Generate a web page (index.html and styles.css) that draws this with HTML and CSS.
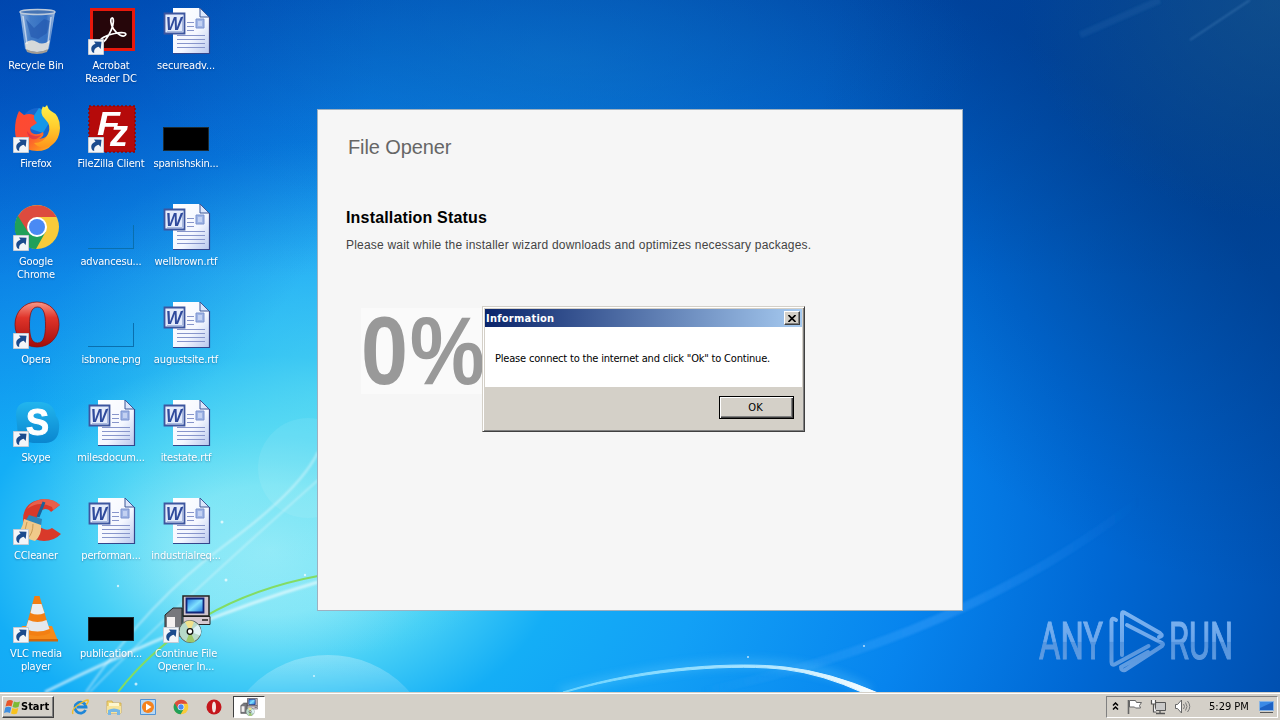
FILE: index.html
```
<!DOCTYPE html>
<html lang="en">
<head>
  <meta charset="UTF-8">
  <title>File Opener</title>
  <link rel="stylesheet" href="styles.css">
</head>
<body>
<!-- shared icons -->
<svg class="defs" width="0" height="0">
  <defs>
    <linearGradient id="gPage" x1="0" y1="0" x2="1" y2="1"><stop offset="0" stop-color="#fff"/><stop offset=".6" stop-color="#f4f7ff"/><stop offset="1" stop-color="#b9c8ee"/></linearGradient>
    <linearGradient id="gRed" x1="0" y1="0" x2="0" y2="1"><stop offset="0" stop-color="#f79a8a"/><stop offset=".35" stop-color="#e0342a"/><stop offset="1" stop-color="#a30d0a"/></linearGradient>
    <linearGradient id="gFox" x1="0" y1="0" x2="1" y2="1"><stop offset="0" stop-color="#ff4a2e"/><stop offset=".45" stop-color="#fb4a35"/><stop offset=".75" stop-color="#ff8a1f"/><stop offset="1" stop-color="#ffc52b"/></linearGradient>
    <linearGradient id="gTail" x1="0" y1="0" x2="0" y2="1"><stop offset="0" stop-color="#fff04a"/><stop offset=".5" stop-color="#ffce2e"/><stop offset="1" stop-color="#ff961c"/></linearGradient>
    <linearGradient id="gSky" x1="0" y1="0" x2="0" y2="1"><stop offset="0" stop-color="#22b5ee"/><stop offset="1" stop-color="#0a86cf"/></linearGradient>
    <linearGradient id="gBin" x1="0" y1="0" x2="1" y2="0"><stop offset="0" stop-color="#c4d6ea" stop-opacity=".8"/><stop offset=".3" stop-color="#6f9dd4" stop-opacity=".6"/><stop offset=".75" stop-color="#5b8ccd" stop-opacity=".55"/><stop offset="1" stop-color="#d5e2f0" stop-opacity=".8"/></linearGradient>
    <linearGradient id="gScreen" x1="0" y1="0" x2="1" y2="1"><stop offset="0" stop-color="#1c74e0"/><stop offset=".5" stop-color="#7fe0ff"/><stop offset="1" stop-color="#1a70dc"/></linearGradient>

    <symbol id="word" viewBox="0 0 48 48">
      <path d="M10 1h26l10 9v36H10z" fill="url(#gPage)"/>
      <path d="M10 46.500h36.500V10" fill="none" stroke="#33468c" stroke-width="1.200"/>
      <path d="M37 1v9h9z" fill="#dbe6fb" stroke="#3d5796" stroke-width="1"/>
      <path d="M24 15.500h7M24 19.500h7M24 23.500h7M14 28.500h28M14 32.500h28M14 36.500h28M14 40.500h28" stroke="#8795cb" stroke-width="1.200"/>
      <path d="M33 12h8v9h-8z" fill="#9fb4e4" stroke="#7b92cf"/>
      <path d="M35 14h4v5h-4z" fill="#c3d1f2"/>
      <path d="M1.500 6.500h20v20h-20z" fill="#e4ebfb" stroke="#3d569f" stroke-width="1.800"/>
      <path d="M4 24.500h15.500V9" fill="none" stroke="#a9badf"/>
      <text x="3" y="22.500" class="word-w" textLength="16" lengthAdjust="spacingAndGlyphs">W</text>
    </symbol>

    <symbol id="shortcut" viewBox="0 0 16 16">
      <path d="M.500.500h15v15H.500z" fill="#f3f5f8" stroke="#c5cbd4"/>
      <path d="M5 13.800C2.300 11 2.500 6.500 7.500 4.800L6 2.500l7.500.3-.8 7.200-2-2.200C8 8.500 5.500 10.500 6.300 13.800z" fill="#1b4b8d"/>
    </symbol>

    <symbol id="bin" viewBox="0 0 48 48">
      <path d="M7 5l5 37q12 6 24 0l6-37z" fill="url(#gBin)"/>
      <ellipse cx="24.500" cy="5" rx="17.500" ry="2.500" fill="#4674b4" stroke="#bccadb" stroke-width="1.500"/>
      <path d="M12 36q6-5 12-1t13-2l-2 10q-11 4-22 0z" fill="#e6e3dc" opacity=".9"/>
      <path d="M13 42q11 6 22 0l-1 3q-10 4-20 0z" fill="#a19c94"/>
      <path d="M13 12l8 9 10-9 6 2-3 12-9 6-7-2z" fill="#2457ad" opacity=".65"/>
      <path d="M10 9l4 28M38 10l-3 26" stroke="#fff" stroke-width="1.500" opacity=".55"/>
    </symbol>

    <symbol id="acrobat" viewBox="0 0 48 48">
      <path d="M3.500 2.500h42v40h-42z" fill="#26060a" stroke="#e8180c" stroke-width="3"/>
      <path d="M12 35.500c3 2 8-5 11-12 3-6 3-13 1-12.500s-1.500 6 1.500 11c4 6 10 8.500 12 6s-4-3-11-1.500c-8 1.500-16 5.500-14.500 9z" fill="none" stroke="#fff" stroke-width="1.700"/>
    </symbol>

    <symbol id="firefox" viewBox="0 0 48 48">
      <circle cx="25" cy="20" r="17" fill="#1766cf"/>
      <path d="M26 3q10 4 10 15l-6 10-12-4q-2-8 8-21z" fill="#1597e8"/>
      <path d="M6 6l5 4q5-2 10 0v4l3 4-6 4q-2 3 1 6 5 3 11-1 2 4-4 7 10-1 14-10l3-2q1 24-19 24Q2 45 2 25 2 14 6 6z" fill="url(#gFox)"/>
      <path d="M30 1q-4 8 2 13 7 7 3 15-4 9-14 9 5 6 14 4 11-4 12-19Q47 10 38 6q-3-2-4-6-3 4-4 1z" fill="url(#gTail)"/>
      <path d="M14 26q4 7 14 4-3 5-9 4-5-3-5-8z" fill="#c81c5a" opacity=".5"/>
    </symbol>

    <symbol id="filezilla" viewBox="0 0 48 48">
      <path d="M1 1h46v46H1z" fill="#b50a0a" stroke="#8e0808" stroke-width="1.600" stroke-dasharray="2 2"/>
      <text x="9" y="30" class="fz-f" textLength="23" lengthAdjust="spacingAndGlyphs">F</text>
      <text x="22" y="41" class="fz-z" textLength="18" lengthAdjust="spacingAndGlyphs">z</text>
    </symbol>

    <symbol id="chrome" viewBox="0 0 48 48">
      <circle cx="24" cy="24" r="22" fill="#f9cb3a"/>
      <path d="M24 24L5 12.500A22 22 0 0 0 23 46l9.500-17z" fill="#20a05a"/>
      <path d="M5 13l10 16 9-15h19.500A22 22 0 0 0 5 13z" fill="#dd4b3e"/>
      <circle cx="24" cy="24" r="10" fill="#fff"/>
      <circle cx="24" cy="24" r="8" fill="#4a8af4"/>
    </symbol>

    <symbol id="opera" viewBox="0 0 48 48">
      <path fill-rule="evenodd" d="M24 1C37 1 46 11 46 23.500S37 46 24 46 2 36 2 23.500 11 1 24 1zM24.500 6C18 6 16.500 14 16.500 24s1.500 18 8 18 8-8 8-18-1.500-18-8-18z" fill="url(#gRed)" stroke="#8f0f0c" stroke-width=".8"/>
    </symbol>

    <symbol id="skype" viewBox="0 0 48 48">
      <path d="M3 16Q3 4 14 3h14q13 1 15 14 4 4 3 13-1 13-13 14H20Q4 42 4 26z" fill="url(#gSky)"/>
      <text x="13" y="35.500" class="skype-s" textLength="23" lengthAdjust="spacingAndGlyphs">S</text>
    </symbol>

    <symbol id="ccleaner" viewBox="0 0 48 48">
      <path d="M47 8Q41 2 31 2 10 4 10 23q2 20 21 21 10 0 17-7l-9-6q-4 3-8 1-8-2-7-10 1-9 8-10 4 0 6 3z" fill="#d9392a"/>
      <path d="M47 8Q41 2 31 2q-12 1-17 10 12-9 25-2l1 3z" fill="#ef7158" opacity=".7"/>
      <path d="M31 5l-6 15" stroke="#1d6196" stroke-width="3"/>
      <path d="M16 18l13 4-1 7-15-6z" fill="#2f86b8"/>
      <path d="M11 22l17 6q1 10-6 16L2 38q7-4 9-16z" fill="#f0c98a"/>
      <path d="M14 25q-1 9-6 14M20 27q0 9-5 14" stroke="#c99a55" fill="none"/>
    </symbol>

    <symbol id="vlc" viewBox="0 0 48 48">
      <path d="M9 31h30l6 15H4z" fill="#f58a1a"/>
      <path d="M4 44h41v2.500H4z" fill="#d46708"/>
      <path d="M21.500 1h5l11 37q-13 6-26 0z" fill="#f37f12"/>
      <path d="M19.500 9h9l3 9q-7 3-14 0z" fill="#eceef0"/>
      <path d="M15.500 25q9 4 18 0l3 9q-12 5-24 0z" fill="#e4e8ec"/>
    </symbol>

    <symbol id="setup" viewBox="0 0 48 48">
      <path d="M2 20l8-7h9v28H2z" fill="#77777c" stroke="#222"/>
      <path d="M4 22h8v15H4z" fill="#f4f0f0"/>
      <path d="M20 1h26v20H20z" fill="#cfc3cd" stroke="#222" stroke-width="1.500"/>
      <path d="M23.500 3.500h17v14h-17z" fill="url(#gScreen)" stroke="#10257a" stroke-width="1.800"/>
      <path d="M20 21.500h27v8H20z" fill="#d6cad2" stroke="#222"/>
      <path d="M39 25h6" stroke="#222" stroke-width="1.500"/>
      <circle cx="27" cy="36.500" r="11" fill="#b8d9c9" stroke="#57605c"/>
      <path d="M27 36.500L22 27q5-3 9 0z" fill="#f1e08a"/>
      <path d="M27 36.500l8-7q5 6 2 11z" fill="#dff3f6"/>
      <path d="M27 36.500l-4 10q6 2 9 0z" fill="#9ec86b"/>
      <circle cx="27" cy="36.500" r="2.800" fill="#fff" stroke="#111" stroke-width="1.300"/>
    </symbol>
  </defs>
</svg>

<div class="desktop">
  <svg class="wallpaper" viewBox="0 0 1280 692">
    <defs>
      <filter id="soft1"><feGaussianBlur stdDeviation="1.200"/></filter>
      <filter id="soft4" x="-10%" y="-50%" width="120%" height="200%"><feGaussianBlur stdDeviation="5"/></filter>
      <linearGradient id="arc" x1="560" y1="0" x2="880" y2="0" gradientUnits="userSpaceOnUse"><stop offset="0" stop-color="#6cd4ff"/><stop offset=".6" stop-color="#a8e4ff"/><stop offset="1" stop-color="#fff"/></linearGradient>
      <linearGradient id="ray" x1="700" y1="0" x2="1140" y2="0" gradientUnits="userSpaceOnUse"><stop offset="0" stop-color="#5ab8ff" stop-opacity="0"/><stop offset=".55" stop-color="#4ba8ff" stop-opacity=".35"/><stop offset="1" stop-color="#3a9bff" stop-opacity="0"/></linearGradient>
      <linearGradient id="bub" x1="0" y1="655" x2="0" y2="700" gradientUnits="userSpaceOnUse"><stop offset="0" stop-color="#fff" stop-opacity=".28"/><stop offset="1" stop-color="#fff" stop-opacity=".1"/></linearGradient>
    </defs>
    <g fill="none" stroke="#fff" filter="url(#soft1)">
      <path d="M45 692Q190 620 318 582" stroke-width="3" opacity=".6"/>
      <path d="M86 692Q150 600 225 545T318 452" stroke-width="2" opacity=".45"/>
      <path d="M90 692Q150 630 318 480" stroke-width="1.500" opacity=".45"/>
      <path d="M700 692Q960 640 1140 500" stroke="url(#ray)" stroke-width="9"/>
      <path d="M1190 40L1250 0" stroke="#7fb0e0" stroke-width="1.500" opacity=".35"/>
      <path d="M1080 35L1160 0" stroke="#5d9bd6" stroke-width="7" opacity=".1"/>
    </g>
    <path d="M118 692Q190 600 318 576" fill="none" stroke="#83dc63" stroke-width="2"/>
    <path d="M560 692Q780 635 870 692" fill="none" stroke="#7fd8ff" stroke-width="8" opacity=".3" filter="url(#soft4)"/>
    <path d="M563 692C650 665 740 662 785 667Q830 672 878 693L864 693Q822 674 785 669.500C740 664 650 668 566 692z" fill="url(#arc)" stroke="url(#arc)" stroke-width="1"/>
    <circle cx="328" cy="764" r="109" fill="url(#bub)"/>
    <circle cx="308" cy="468" r="50" fill="#fff" opacity=".08"/>
    <g fill="#fff" opacity=".7">
      <circle cx="222" cy="522" r="1.500"/><circle cx="226" cy="580" r="1.500"/><circle cx="136" cy="684" r="1.500"/><circle cx="305" cy="575" r="1.200"/><circle cx="118" cy="586" r="1.200"/><circle cx="314" cy="676" r="1"/><circle cx="748" cy="657" r="1"/><circle cx="864" cy="646" r="1"/>
    </g>
  </svg>

  <div class="icons">
    <div class="icon"><div class="pic"><svg><use href="#bin"/></svg></div><span>Recycle Bin</span></div>
    <div class="icon"><div class="pic"><svg><use href="#firefox"/></svg><svg class="arrow"><use href="#shortcut"/></svg></div><span>Firefox</span></div>
    <div class="icon"><div class="pic"><svg><use href="#chrome"/></svg><svg class="arrow"><use href="#shortcut"/></svg></div><span>Google<br>Chrome</span></div>
    <div class="icon"><div class="pic"><svg><use href="#opera"/></svg><svg class="arrow"><use href="#shortcut"/></svg></div><span>Opera</span></div>
    <div class="icon"><div class="pic"><svg><use href="#skype"/></svg><svg class="arrow"><use href="#shortcut"/></svg></div><span>Skype</span></div>
    <div class="icon"><div class="pic"><svg><use href="#ccleaner"/></svg><svg class="arrow"><use href="#shortcut"/></svg></div><span>CCleaner</span></div>
    <div class="icon"><div class="pic"><svg><use href="#vlc"/></svg><svg class="arrow"><use href="#shortcut"/></svg></div><span>VLC media<br>player</span></div>

    <div class="icon"><div class="pic"><svg><use href="#acrobat"/></svg><svg class="arrow"><use href="#shortcut"/></svg></div><span>Acrobat<br>Reader DC</span></div>
    <div class="icon"><div class="pic"><svg><use href="#filezilla"/></svg><svg class="arrow"><use href="#shortcut"/></svg></div><span>FileZilla Client</span></div>
    <div class="icon"><div class="pic"><div class="thumb clear"></div></div><span>advancesu...</span></div>
    <div class="icon"><div class="pic"><div class="thumb clear"></div></div><span>isbnone.png</span></div>
    <div class="icon"><div class="pic"><svg><use href="#word"/></svg></div><span>milesdocum...</span></div>
    <div class="icon"><div class="pic"><svg><use href="#word"/></svg></div><span>performan...</span></div>
    <div class="icon"><div class="pic"><div class="thumb"></div></div><span>publication...</span></div>

    <div class="icon"><div class="pic"><svg><use href="#word"/></svg></div><span>secureadv...</span></div>
    <div class="icon"><div class="pic"><div class="thumb"></div></div><span>spanishskin...</span></div>
    <div class="icon"><div class="pic"><svg><use href="#word"/></svg></div><span>wellbrown.rtf</span></div>
    <div class="icon"><div class="pic"><svg><use href="#word"/></svg></div><span>augustsite.rtf</span></div>
    <div class="icon"><div class="pic"><svg><use href="#word"/></svg></div><span>itestate.rtf</span></div>
    <div class="icon"><div class="pic"><svg><use href="#word"/></svg></div><span>industrialreq...</span></div>
    <div class="icon"><div class="pic"><svg><use href="#setup"/></svg><svg class="arrow"><use href="#shortcut"/></svg></div><span>Continue File<br>Opener In...</span></div>
  </div>

  <div class="installer">
    <h1>File Opener</h1>
    <h2>Installation Status</h2>
    <p>Please wait while the installer wizard downloads and optimizes necessary packages.</p>
    <div class="percent"><span>0%</span></div>
  </div>

  <div class="dialog">
    <div class="dialog-title">
      <span>Information</span>
      <button class="close"><svg width="8" height="7" viewBox="0 0 8 7"><path d="M.500 0l7 7M7.500 0l-7 7" stroke="#000" stroke-width="1.600"/></svg></button>
    </div>
    <div class="dialog-body">Please connect to the internet and click "Ok" to Continue.</div>
    <div class="dialog-buttons"><button class="ok">OK</button></div>
  </div>

  <svg class="watermark" width="220" height="80" viewBox="0 0 220 80">
    <defs>
      <linearGradient id="wm" x1="0" y1="0" x2="0" y2="70" gradientUnits="userSpaceOnUse"><stop offset="0" stop-color="#8fc0f5"/><stop offset=".52" stop-color="#78aeee"/><stop offset=".53" stop-color="#5f9be0"/><stop offset="1" stop-color="#6fa6e6"/></linearGradient>
    </defs>
    <g fill="url(#wm)" stroke="url(#wm)" stroke-width="1.200" class="wm-text">
      <text x="4" y="54" textLength="64" lengthAdjust="spacingAndGlyphs">ANY</text>
      <text x="134" y="54" textLength="64" lengthAdjust="spacingAndGlyphs">RUN</text>
    </g>
    <g fill="none" stroke="url(#wm)" stroke-width="4" stroke-linejoin="round" stroke-linecap="round">
      <path d="M81 15q-4-3-4.500 1v41q0 4 4 2l33-18"/>
      <path d="M87 50V9q0-3 3-1l35 20q4 3-1 4"/>
      <path d="M92 20l35 18q2 1 0 3L90 65q-4 1-4-3l27-15"/>
    </g>
  </svg>
</div>

<div class="taskbar">
  <button class="start">
    <svg width="17" height="16" viewBox="0 0 17 16">
      <path d="M3 2q3-2 6 0L7.500 7.500Q5 6 1.500 7.500z" fill="#e8562a"/>
      <path d="M10 2.500q3 1.500 6 0L14.500 8q-3 1.500-6 0z" fill="#7dba35"/>
      <path d="M1.300 8.500q3-1.500 6 0L6 14q-3-1.500-6 0z" fill="#3f8fe0"/>
      <path d="M8.300 9q3 1.500 6 0L13 14.500q-3 1.500-6 0z" fill="#f8c21d"/>
    </svg>
    Start
  </button>
  <div class="quick">
    <svg width="18" height="18" viewBox="0 0 18 18">
      <path d="M14.500 12A5.500 5.500 0 1 1 15 9H6" fill="none" stroke="#1e86d8" stroke-width="2.800"/>
      <path d="M2 16q-2-4 5-9t10-5q1 2-2 5" fill="none" stroke="#f0bd2c" stroke-width="1.400"/>
    </svg>
    <svg width="18" height="18" viewBox="0 0 18 18">
      <path d="M2 3h5l1 2h8v10H2z" fill="#f1d676" stroke="#cda84a" stroke-width=".8"/>
      <path d="M4 5h10v4H4z" fill="#fdf6cf"/>
      <path d="M2 8h14v7H2z" fill="#f8e49b"/>
      <path d="M3 17v-5q6-3 12 0v5h-3v-3H6v3z" fill="#76b8e6"/>
    </svg>
    <svg width="18" height="18" viewBox="0 0 18 18">
      <path d="M1.500 1.500h15v15h-15z" fill="#b8d8f4" stroke="#4f93d6"/>
      <circle cx="9" cy="9" r="6" fill="#f5821e"/>
      <path d="M7 5.500l5.500 3.500L7 12.500z" fill="#fff"/>
    </svg>
    <svg width="16" height="16"><use href="#chrome"/></svg>
    <svg width="18" height="18" viewBox="0 0 18 18">
      <circle cx="9" cy="9" r="7.500" fill="#c4161c"/>
      <ellipse cx="9" cy="9" rx="2" ry="5.500" fill="#f3e6e4"/>
    </svg>
  </div>
  <div class="task">
    <svg width="18" height="18" viewBox="0 0 48 48"><use href="#setup"/></svg>
  </div>
  <div class="tray">
    <svg width="7" height="9" viewBox="0 0 7 9"><path d="M1 3.500L3.500 1 6 3.500M1 7.500L3.500 5 6 7.500" fill="none" stroke="#000" stroke-width="1.500"/></svg>
    <svg width="17" height="17" viewBox="0 0 17 17"><path d="M2.500 2v14" stroke="#666" stroke-width="1.600"/><path d="M3.500 2.500h6l1 2h5l-2 3 1 2.500h-5l-1-1h-5z" fill="#fff" stroke="#666"/></svg>
    <svg width="17" height="17" viewBox="0 0 17 17"><path d="M5.500 4.500h10v8h-10z" fill="#c9c9c9" stroke="#555"/><path d="M6 15.500h9M10 13v2" stroke="#555" stroke-width="1.300"/><path d="M1.500 2v4h4V2M3.500 6v8h3" fill="#fff" stroke="#555" stroke-width="1.200"/></svg>
    <svg width="17" height="17" viewBox="0 0 17 17"><path d="M1.500 6.500h2l4-4.500v13l-4-4.500h-2z" fill="#fff" stroke="#666"/><path d="M9.500 6q2 2.500 0 5M11.500 4.500q3 4 0 8M13.500 3q4.500 5.500 0 11" fill="none" stroke="#777"/></svg>
    <span class="clock">5:29 PM</span>
    <svg width="16" height="14" viewBox="0 0 16 14"><path d="M.500 1.500h14v9H.500z" fill="#1d62c4" stroke="#88b4e4"/><path d="M1 2h13L1 8z" fill="#3b8ae6"/><path d="M1 12.500h13" stroke="#555"/></svg>
  </div>
</div>
</body>
</html>
```

FILE: styles.css
```
* {
  margin: 0;
  padding: 0;
  box-sizing: border-box;
}

:root {
  --face: #d4d0c8;
  --ui: Tahoma, "DejaVu Sans Condensed", "DejaVu Sans", sans-serif;
}

body {
  width: 1280px;
  height: 720px;
  overflow: hidden;
  display: flex;
  flex-direction: column;
  font-family: var(--ui);
  font-size: 11px;
}

.defs {
  position: absolute;
}

.desktop {
  position: relative;
  flex: 1;
  overflow: hidden;
  background:
    radial-gradient(ellipse 260px 220px at 1280px 0, rgba(30, 90, 135, 0.5), rgba(30, 90, 135, 0)),
    radial-gradient(ellipse 480px 460px at 1300px 130px, rgba(0, 55, 120, 0.55), rgba(0, 55, 120, 0)),
    radial-gradient(ellipse 420px 170px at 560px 60px, rgba(20, 125, 200, 0.4), rgba(20, 125, 200, 0)),
    linear-gradient(to bottom, rgba(0, 60, 150, 0.4), rgba(0, 60, 160, 0) 40%),
    radial-gradient(ellipse 380px 460px at 0 0, rgba(0, 60, 180, 0.55), rgba(0, 60, 180, 0)),
    radial-gradient(ellipse 290px 260px at 320px 400px, rgba(100, 225, 240, 0.6), rgba(70, 210, 240, 0)),
    radial-gradient(ellipse 1080px 720px at 270px 550px, #a0edfa 0, #88e7f8 9%, #48d0f6 17%, #14aef6 27%, #12a0f6 40%, #0784ee 60%, #0068d4 77%, #004aa8 100%);
}

.wallpaper {
  position: absolute;
  left: 0;
  top: 0;
  width: 1280px;
  height: 692px;
}

/* desktop icons */
.icons {
  position: relative;
  width: 225px;
  margin-left: -1px;
  padding-top: 7px;
  display: grid;
  grid-auto-flow: column;
  grid-template-rows: repeat(7, 98px);
  grid-auto-columns: 75px;
}

.icon {
  display: flex;
  flex-direction: column;
  align-items: center;
  color: #fff;
  text-align: center;
  line-height: 13px;
}

.icon span {
  margin-top: 4px;
  margin-left: -1px;
  white-space: nowrap;
  letter-spacing: -0.15px;
  text-shadow: 0 1px 2px rgba(0, 30, 80, 0.4);
}

.pic {
  position: relative;
  width: 48px;
  height: 48px;
  display: flex;
  align-items: flex-end;
  justify-content: center;
}

.pic svg {
  width: 48px;
  height: 48px;
}

.pic .arrow {
  position: absolute;
  left: 0;
  bottom: 0;
  width: 16px;
  height: 16px;
}

.thumb {
  width: 46px;
  height: 24px;
  margin: 0 2px 2px 0;
  background: #000;
  border: 1px solid #1c2a30;
}

.thumb.clear {
  background: none;
  border: none;
  border-right: 1px solid #0a6fae;
  border-bottom: 1px solid #0a6fae;
}

.word-w {
  font: italic bold 19px "Liberation Sans", sans-serif;
  fill: #2f4a9c;
}

.fz-f {
  font: italic bold 34px "Liberation Sans", sans-serif;
  fill: #fff;
}

.fz-z {
  font: italic bold 36px "Liberation Sans", sans-serif;
  fill: #fff;
}

.skype-s {
  font: bold 36px "Liberation Sans", sans-serif;
  fill: #fff;
  stroke: #fff;
}

/* installer window */
.installer {
  position: absolute;
  left: 317px;
  top: 109px;
  width: 646px;
  height: 502px;
  padding: 24px 28px;
  background: #f6f6f6;
  border: 1px solid #9db0c0;
  font-family: "Liberation Sans", Arial, sans-serif;
}

.installer h1 {
  margin-left: 2px;
  font-size: 20px;
  font-weight: normal;
  line-height: 26px;
  color: #666;
  letter-spacing: -0.1px;
}

.installer h2 {
  margin-top: 49px;
  font-size: 16px;
  line-height: 18px;
  color: #000;
  letter-spacing: 0.17px;
}

.installer p {
  margin-top: 10px;
  font-size: 12px;
  line-height: 16px;
  color: #444;
  white-space: nowrap;
  letter-spacing: 0.2px;
}

.percent {
  width: 126px;
  height: 86px;
  margin: 55px 0 0 15px;
  background: #fafafa;
}

.percent span {
  display: block;
  font-size: 96px;
  font-weight: bold;
  line-height: 86px;
  color: #999;
  letter-spacing: 2px;
  transform: scaleX(0.88);
  transform-origin: left;
}

/* message box */
.dialog {
  position: absolute;
  left: 482px;
  top: 306px;
  width: 323px;
  height: 126px;
  padding: 2px;
  display: flex;
  flex-direction: column;
  background: var(--face);
  border: 1px solid;
  border-color: #d4d0c8 #404040 #404040 #d4d0c8;
  box-shadow: inset 1px 1px #fff, inset -1px -1px #808080;
}

.dialog-title {
  height: 18px;
  padding: 0 2px 0 1px;
  display: flex;
  align-items: center;
  justify-content: space-between;
  background: linear-gradient(to right, #0a246a, #a6caf0);
  color: #fff;
  font-weight: bold;
  letter-spacing: 0.25px;
}

button {
  font-family: var(--ui);
  font-size: 11px;
  color: #000;
  background: var(--face);
  border: 1px solid;
  border-color: #fff #404040 #404040 #fff;
  box-shadow: inset -1px -1px #808080;
}

.close {
  width: 16px;
  height: 14px;
  display: flex;
  align-items: center;
  justify-content: center;
}

.dialog-body {
  height: 60px;
  padding: 2px 10px 0;
  background: #fff;
  line-height: 59px;
  white-space: nowrap;
  letter-spacing: -0.19px;
}

.dialog-buttons {
  padding: 9px 8px 0;
  display: flex;
  justify-content: flex-end;
}

.ok {
  width: 75px;
  height: 23px;
  padding-right: 2px;
  border-color: #000;
  box-shadow: inset 1px 1px #fff, inset -1px -1px #404040, inset -2px -2px #808080;
}

.watermark {
  position: absolute;
  left: 1035px;
  top: 605px;
  opacity: 0.9;
}

.wm-text {
  font: 52px Roboto, sans-serif;
}

/* taskbar */
.taskbar {
  position: relative;
  height: 28px;
  padding: 2px 2px 2px;
  display: flex;
  align-items: center;
  background: var(--face);
  border-top: 1px solid #d4d0c8;
  box-shadow: inset 0 1px #fff;
}

.start {
  width: 52px;
  height: 22px;
  padding-left: 1px;
  display: flex;
  align-items: center;
  font-weight: bold;
}

.quick {
  width: 179px;
  padding-left: 17px;
  display: flex;
  align-items: center;
  gap: 16px;
}

.task {
  width: 32px;
  height: 22px;
  display: flex;
  align-items: center;
  justify-content: center;
  background: #fff;
  border: 1px solid;
  border-color: #404040 #fff #fff #404040;
}

.tray {
  width: 172px;
  height: 22px;
  margin-left: auto;
  padding: 0 1px 0 5px;
  display: flex;
  align-items: center;
  gap: 7px;
  border: 1px solid;
  border-color: #808080 #fff #fff #808080;
}

.clock {
  margin: 0 3px 0 11px;
  white-space: nowrap;
}
```
